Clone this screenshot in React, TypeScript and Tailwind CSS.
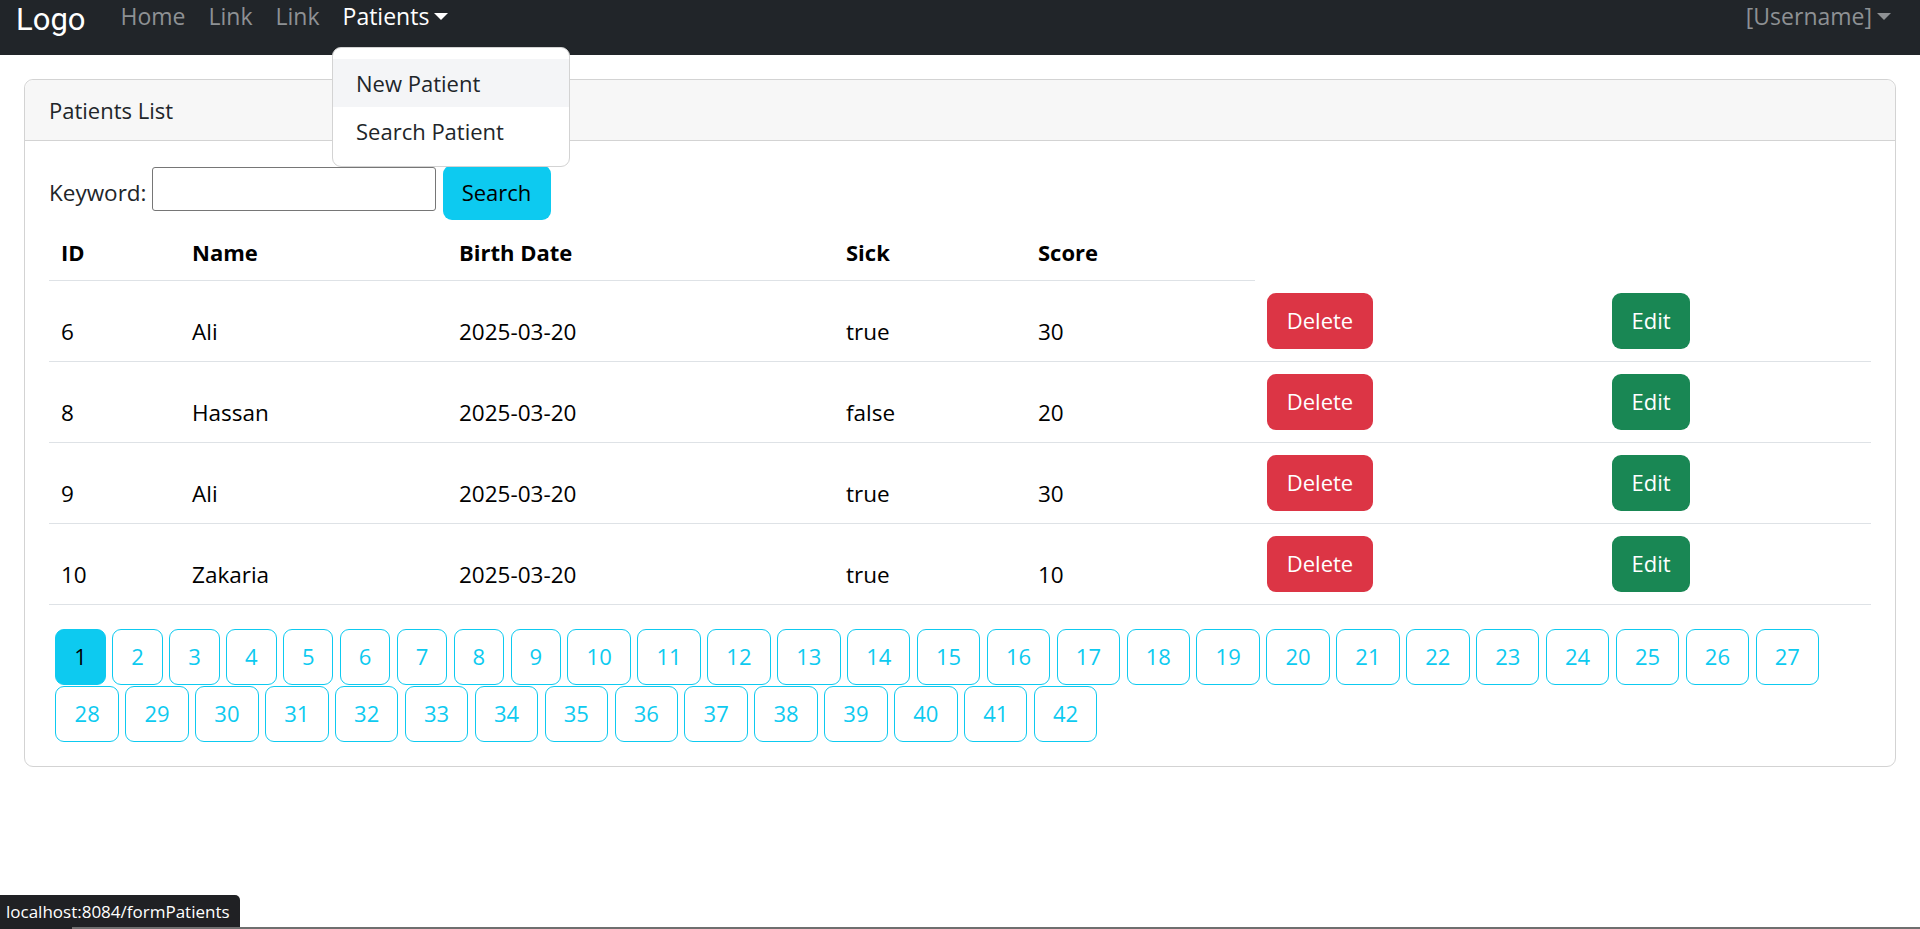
import clsx from 'clsx';

const patients = [
  { id: 6, name: 'Ali', birthDate: '2025-03-20', sick: 'true', score: 30 },
  { id: 8, name: 'Hassan', birthDate: '2025-03-20', sick: 'false', score: 20 },
  { id: 9, name: 'Ali', birthDate: '2025-03-20', sick: 'true', score: 30 },
  { id: 10, name: 'Zakaria', birthDate: '2025-03-20', sick: 'true', score: 10 },
];

const pages = Array.from({ length: 42 }, (_, i) => i + 1);

function Caret({ className }: { className?: string }) {
  return (
    <span
      className={clsx(
        'inline-block h-0 w-0 border-x-[7px] border-t-[7px] border-x-transparent',
        className,
      )}
    />
  );
}

function Navbar() {
  return (
    <nav className="flex h-[55px] items-start bg-[#212529] text-[23px] leading-none">
      <span className="ml-[16px] mt-[3.5px] w-[70px] font-['Roboto',sans-serif] text-[31px] text-white">
        Logo
      </span>
      <div className="ml-[34.5px] mt-[5px] flex gap-[23px] text-[#8e9194]">
        <span>Home</span>
        <span>Link</span>
        <span>Link</span>
        <span className="flex items-center text-white">
          Patients
          <Caret className="ml-[5px] border-t-white" />
        </span>
      </div>
      <span className="ml-auto mr-[29px] mt-[5px] flex items-center text-[#8e9194]">
        [Username]
        <Caret className="ml-[5px] border-t-[#8e9194]" />
      </span>
    </nav>
  );
}

function DropdownMenu() {
  return (
    <div className="absolute left-[332px] top-[47px] w-[238px] rounded-[9px] border border-[#d3d3d3] bg-white py-[11px] text-[22px] leading-[48px] text-[#212529]">
      <div className="bg-[#f4f5f7] px-[23px]">New Patient</div>
      <div className="px-[23px]">Search Patient</div>
    </div>
  );
}

export default function App() {
  return (
    <div className="relative min-h-[929px] bg-white font-['Open_Sans',sans-serif]">
      <Navbar />

      <div className="mx-[24px] mt-[24px] rounded-[9px] border border-[#d3d3d3]">
        <div className="h-[61px] rounded-t-[9px] border-b border-[#d3d3d3] bg-[#f7f7f7] px-[24px] text-[22px] leading-[61px] text-[#212529]">
          Patients List
        </div>

        <div className="p-[24px] text-[22px]">
          <div className="flex h-[55px] items-start">
            <label className="mt-[10px] text-[22.5px] leading-[36px] text-[#212529]">Keyword:</label>
            <input
              type="text"
              className="ml-[5px] mt-[2px] h-[44px] w-[284px] rounded-[3px] border border-[#767676] px-2 outline-none"
            />
            <button className="ml-[7px] h-[55px] w-[108px] rounded-[9px] bg-[#0dcaf0] text-black">
              Search
            </button>
          </div>

          <table className="w-full table-fixed border-collapse text-black">
            <colgroup>
              <col className="w-[131px]" />
              <col className="w-[267px]" />
              <col className="w-[387px]" />
              <col className="w-[192px]" />
              <col className="w-[229px]" />
              <col className="w-[345px]" />
              <col />
            </colgroup>
            <thead>
              <tr>
                {['ID', 'Name', 'Birth Date', 'Sick', 'Score'].map((h) => (
                  <th
                    key={h}
                    className="border-b border-[#dee2e6] px-[12px] pb-[10.5px] pt-[13.5px] text-left font-bold leading-[36px]"
                  >
                    {h}
                  </th>
                ))}
              </tr>
            </thead>
            <tbody className="text-[22.5px]">
              {patients.map((p) => (
                <tr key={p.id} className="border-b border-[#dee2e6]">
                  <td className="px-[12px] pb-[11px] pt-[12px] align-bottom leading-[36px]">{p.id}</td>
                  <td className="px-[12px] pb-[11px] pt-[12px] align-bottom leading-[36px]">{p.name}</td>
                  <td className="px-[12px] pb-[11px] pt-[12px] align-bottom leading-[36px]">{p.birthDate}</td>
                  <td className="px-[12px] pb-[11px] pt-[12px] align-bottom leading-[36px]">{p.sick}</td>
                  <td className="px-[12px] pb-[11px] pt-[12px] align-bottom leading-[36px]">{p.score}</td>
                  <td className="p-[12px] align-top">
                    <button className="h-[56px] w-[106px] rounded-[9px] bg-[#dc3545] text-[22px] text-white">
                      Delete
                    </button>
                  </td>
                  <td className="p-[12px] align-top">
                    <button className="h-[56px] w-[78px] rounded-[9px] bg-[#198754] text-[22px] text-white">
                      Edit
                    </button>
                  </td>
                </tr>
              ))}
            </tbody>
          </table>

          <div className="mt-[24px] flex flex-wrap gap-y-px">
            {pages.map((n) => (
              <a
                key={n}
                className={clsx(
                  'ml-[6.4px] flex h-[56px] items-center justify-center rounded-[9px] border border-[#0dcaf0]',
                  n < 10 ? 'w-[50.5px]' : 'w-[63.5px]',
                  n === 1 ? 'bg-[#0dcaf0] text-black' : 'text-[#0dcaf0]',
                )}
              >
                {n}
              </a>
            ))}
          </div>
        </div>
      </div>

      <DropdownMenu />

      <div className="fixed bottom-0 left-0 flex h-[34px] w-[240px] items-center rounded-tr-[5px] bg-[#202124] px-[6px] text-[17px] text-white">
        localhost:8084/formPatients
      </div>
      <div className="fixed bottom-0 left-[72px] right-0 h-[2px] bg-[#6f6f6f]" />
    </div>
  );
}
